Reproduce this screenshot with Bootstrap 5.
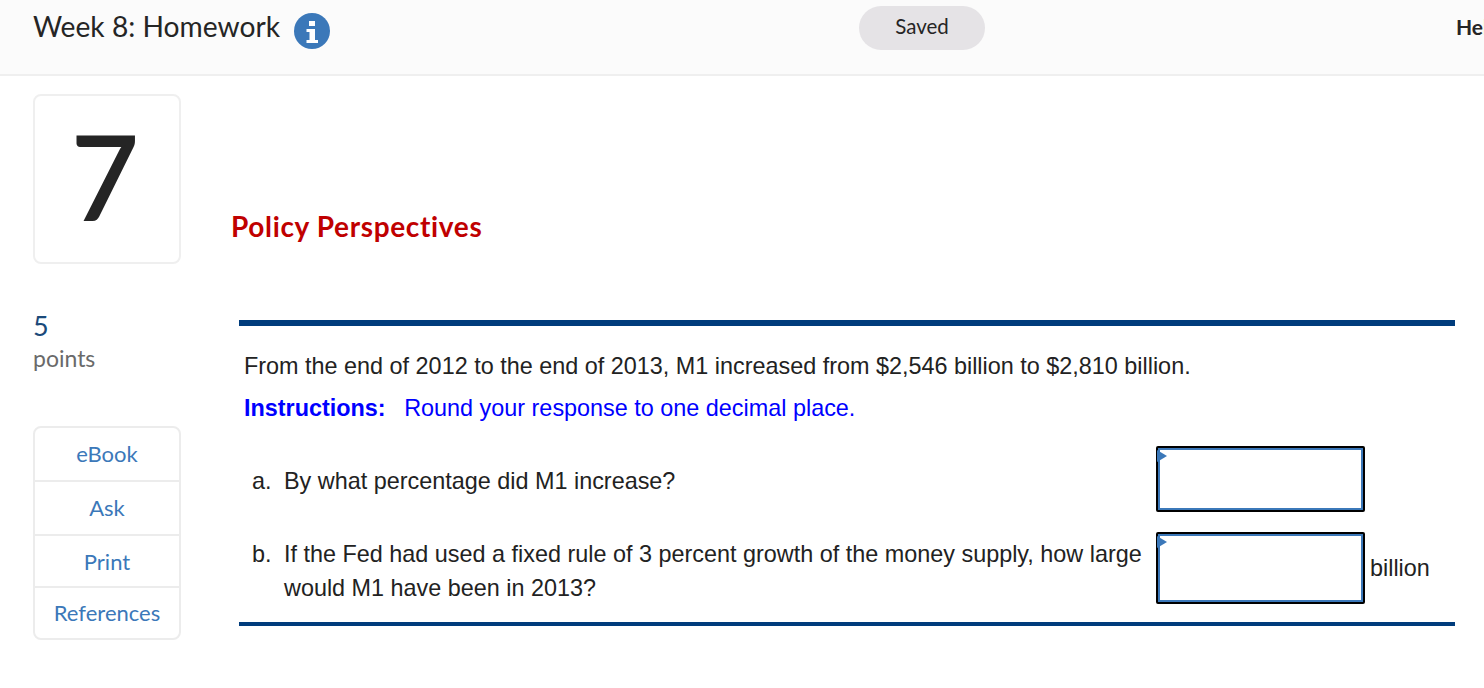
<!DOCTYPE html>
<html lang="en">
<head>
    <meta charset="UTF-8">
    <meta name="viewport" content="width=device-width, initial-scale=1">
    <title>Week 8: Homework</title>
    <link rel="stylesheet" href="https://cdn.jsdelivr.net/npm/bootstrap@5.3.0/dist/css/bootstrap.min.css">
    <style>
        body {
            font-family: Lato, "Open Sans", sans-serif;
            font-variant-ligatures: none;
            color: #252525;
            overflow: hidden;
        }
        .top-bar {
            height: 76px;
            background: #fbfbfb;
            border-bottom: 2px solid #efefef;
            padding: 6px 0 0 33px;
        }
        .hw-title { font-size: 28.2px; line-height: 40px; width: 261px; flex: none; white-space: nowrap; }
        .info-dot { width: 36px; height: 36px; margin-top: 7px; }
        .saved-pill {
            width: 126px;
            height: 44px;
            margin-left: 529px;
            background: #e5e3e6;
            border-radius: 22px;
            font-size: 20.5px;
            padding-top: 5px;
        }
        .help-link { font-size: 21px; font-weight: 700; margin-left: 471px; margin-top: 5px; white-space: nowrap; }
        .side-col { width: 148px; margin-left: 33px; }
        .num-box {
            height: 170px;
            margin-top: 18px;
            border: 2px solid #efefef;
            border-radius: 8px;
            padding-right: 4px;
            font-size: 116px;
            line-height: 160px;
            -webkit-text-stroke: 2px #252525;
        }
        .pts-num { font-size: 27px; line-height: 30px; color: #1b4a7a; margin-top: 47px; }
        .pts-lbl { font-size: 23px; line-height: 30px; color: #6a6a6a; margin-top: 2px; }
        .tool-list {
            margin-top: 53px;
            border: 2px solid #ececec;
            border-radius: 8px;
        }
        .tool-list a {
            display: block;
            text-align: center;
            color: #3b78b9;
            font-size: 22px;
            line-height: 52px;
            text-decoration: none;
            border-bottom: 2px solid #ececec;
        }
        .tool-list a:nth-child(n+3) { line-height: 50px; }
        .tool-list a:nth-child(3) { line-height: 48px; padding-top: 2px; }
        .tool-list a:last-child { border-bottom: 0; }
        .main-col { margin-left: 50px; width: 1224px; }
        .part-title {
            color: #c00000;
            font-size: 28px;
            letter-spacing: .65px;
            font-weight: 700;
            line-height: 34px;
            margin-top: 133px;
        }
        .q-panel {
            margin: 77px 0 0 8px;
            width: 1216px;
            height: 306px;
            border-top: 6px solid #003c7c;
            border-bottom: 4px solid #003c7c;
            padding: 23px 0 0 5px;
            font-family: "Liberation Sans", Arial, sans-serif;
            font-size: 23.4px;
            line-height: 34px;
            color: #222;
        }
        .q-instr { color: #0000ff; margin-top: 8px; }
        .q-instr b { margin-right: 12px; }
        .q-row { display: flex; margin-left: 8px; }
        .q-letter { width: 32px; flex: none; }
        .q-text { width: 872px; flex: none; }
        .ans-box {
            position: relative;
            width: 209px;
            flex: none;
            border: 2px solid #000;
            border-radius: 2px;
        }
        .ans-box input {
            display: block;
            width: 100%;
            height: 100%;
            border: 2px solid #3b78b9;
            border-radius: 0;
            outline: 0;
            background: #fff;
        }
        .ans-box::before {
            content: "";
            position: absolute;
            top: 2px;
            left: -1px;
            border-left: 10px solid #3b78b9;
            border-top: 6.5px solid transparent;
            border-bottom: 6.5px solid transparent;
        }
        .box-a { height: 66px; }
        .box-b { height: 72px; }
        .row-a { margin-top: 21px; }
        .row-a .q-letter, .row-a .q-text { padding-top: 4px; }
        .row-b { margin-top: 20px; }
        .row-b .q-letter, .row-b .q-text { padding-top: 5px; }
        .ans-unit { margin-left: 5px; padding-bottom: 2px; align-self: center; }
    </style>
</head>
<body>

    <!-- barra superior -->
    <header class="top-bar d-flex align-items-start">
        <div class="hw-title">Week 8: Homework</div>
        <svg class="info-dot flex-shrink-0" viewBox="0 0 36 36" aria-label="info">
            <circle cx="18" cy="18" r="18" fill="#3b78b9"/>
            <rect x="15" y="8" width="6" height="5" fill="#fff"/>
            <path d="M12.5 16h8.5v11h3v3H12.5v-3h3v-8h-3z" fill="#fff"/>
        </svg>
        <div class="saved-pill text-center flex-shrink-0">Saved</div>
        <div class="help-link">Help</div>
    </header>

    <div class="d-flex">
        <div class="side-col flex-shrink-0">
            <div class="num-box text-center">7</div>
            <div class="pts-num">5</div>
            <div class="pts-lbl">points</div>
            <div class="tool-list">
                <a href="#">eBook</a>
                <a href="#">Ask</a>
                <a href="#">Print</a>
                <a href="#">References</a>
            </div>
        </div>

        <div class="main-col flex-shrink-0">
            <div class="part-title">Policy Perspectives</div>
            <div class="q-panel">
                <div>From the end of 2012 to the end of 2013, M1 increased from $2,546 billion to $2,810 billion.</div>
                <div class="q-instr"><b>Instructions:</b> Round your response to one decimal place.</div>
                <div class="q-row row-a">
                    <div class="q-letter align-self-center">a.</div>
                    <div class="q-text align-self-center">By what percentage did M1 increase?</div>
                    <div class="ans-box box-a"><input type="text" aria-label="a"></div>
                </div>
                <div class="q-row row-b">
                    <div class="q-letter">b.</div>
                    <div class="q-text">If the Fed had used a fixed rule of 3 percent growth of the money supply, how large would M1 have been in 2013?</div>
                    <div class="ans-box box-b"><input type="text" aria-label="b"></div>
                    <div class="ans-unit">billion</div>
                </div>
            </div>
        </div>
    </div>

    <script src="https://cdn.jsdelivr.net/npm/bootstrap@5.3.0/dist/js/bootstrap.bundle.min.js"></script>
</body>
</html>
